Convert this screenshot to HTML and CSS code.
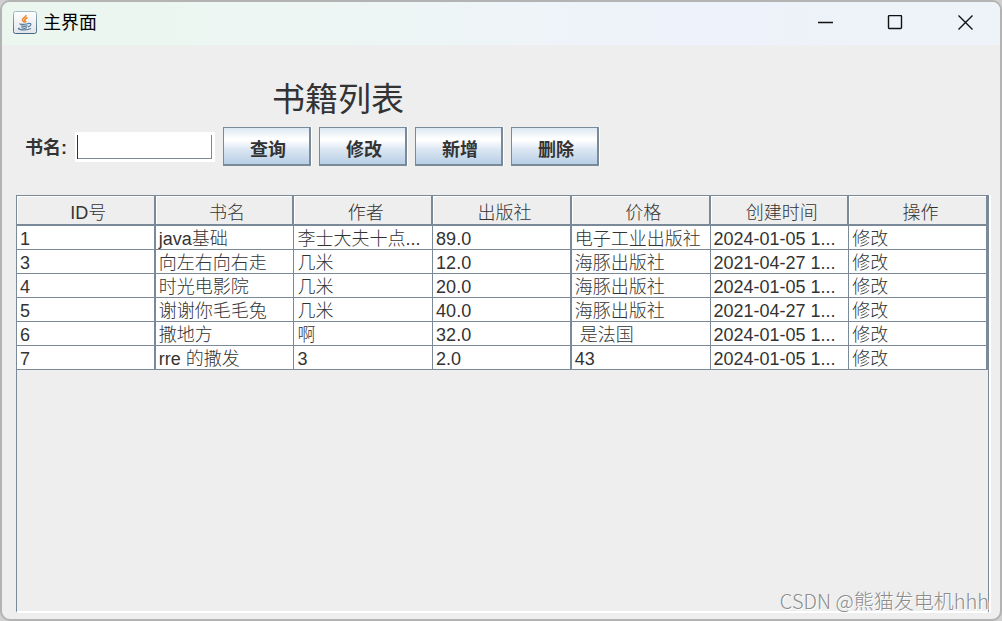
FILE: index.html
```html
<!DOCTYPE html>
<html lang="zh-CN">
<head>
<meta charset="utf-8">
<meta name="viewport" content="width=device-width, initial-scale=1">
<title>主界面</title>
<link rel="stylesheet" href="styles.css">
</head>
<body>
<div class="window">
  <header class="titlebar">
    <svg class="app-icon" viewBox="0 0 24 24" aria-hidden="true">
      <defs><linearGradient id="tile" x1="0" y1="0" x2="0" y2="1"><stop offset="0" stop-color="#fff"/><stop offset="1" stop-color="#e2e4e8"/></linearGradient>
      <linearGradient id="edge" x1="0" y1="0" x2="0" y2="1"><stop offset="0" stop-color="#9fbac6"/><stop offset="1" stop-color="#456685"/></linearGradient></defs>
      <rect x="0.5" y="0.5" width="23" height="22" rx="2" fill="url(#tile)" stroke="url(#edge)"/>
      <path d="M13 4C13.500 6.500 8.500 7 9.500 9.200C10 10 11 10.500 11.300 11.500M14.500 6.500C11.500 8.200 11 9 12.700 10.500L12 11.500" fill="none" stroke="#f08a2c" stroke-width="1.600"/>
      <path d="M7 12.500C6 13.700 14 13.700 16 12.300M8 14.500C8.500 15.500 13 15.500 14.500 14.600M8.500 16.300C10 17.500 12.500 17.300 14 16.500M15.500 12.500C19 11.500 18.500 15 15 15.800M6.500 17C2 18.500 13 20 18 17.500" fill="none" stroke="#5c81a0" stroke-width="1.300"/>
    </svg>
    <span class="caption">主界面</span>
    <div class="window-controls">
      <button type="button" class="control" aria-label="最小化"><svg viewBox="0 0 16 16"><path d="M1 7.500H16"/></svg></button>
      <button type="button" class="control" aria-label="最大化"><svg viewBox="0 0 16 16"><rect x="1.500" y="0.500" width="13" height="13" rx="1"/></svg></button>
      <button type="button" class="control" aria-label="关闭"><svg viewBox="0 0 16 16"><path d="M1.500 0.500L15.500 14.500M15.500 0.500L1.500 14.500"/></svg></button>
    </div>
  </header>
  <main class="content">
    <h1 class="heading">书籍列表</h1>
    <form class="search">
      <label class="search-label" for="book-name">书名:</label>
      <input class="search-input" id="book-name" type="text">
      <button type="button" class="action">查询</button>
      <button type="button" class="action">修改</button>
      <button type="button" class="action">新增</button>
      <button type="button" class="action">删除</button>
    </form>
    <div class="table-pane">
      <table class="books">
        <thead>
          <tr><th>ID号</th><th>书名</th><th>作者</th><th>出版社</th><th>价格</th><th>创建时间</th><th>操作</th></tr>
        </thead>
        <tbody>
          <tr><td>1</td><td>java基础</td><td>李士大夫十点...</td><td>89.0</td><td>电子工业出版社</td><td>2024-01-05 1...</td><td>修改</td></tr>
          <tr><td>3</td><td>向左右向右走</td><td>几米</td><td>12.0</td><td>海豚出版社</td><td>2021-04-27 1...</td><td>修改</td></tr>
          <tr><td>4</td><td>时光电影院</td><td>几米</td><td>20.0</td><td>海豚出版社</td><td>2024-01-05 1...</td><td>修改</td></tr>
          <tr><td>5</td><td>谢谢你毛毛兔</td><td>几米</td><td>40.0</td><td>海豚出版社</td><td>2021-04-27 1...</td><td>修改</td></tr>
          <tr><td>6</td><td>撒地方</td><td>啊</td><td>32.0</td><td> 是法国</td><td>2024-01-05 1...</td><td>修改</td></tr>
          <tr><td>7</td><td>rre 的撒发</td><td>3</td><td>2.0</td><td>43</td><td>2024-01-05 1...</td><td>修改</td></tr>
        </tbody>
      </table>
    </div>
  </main>
  <div class="watermark">CSDN @熊猫发电机hhh</div>
</div>
</body>
</html>
```
FILE: styles.css
```css
* {
  box-sizing: border-box;
}

body {
  margin: 0;
  background: #d0d0d0;
  color: #333;
  font-family: "Liberation Sans", "Noto Sans CJK SC", sans-serif;
  font-size: 18px;
}

.window {
  position: relative;
  display: flex;
  flex-direction: column;
  min-height: 100vh;
  overflow: hidden;
  border: 2px solid #b3b3b3;
  border-radius: 10px;
  background: #eee;
}

.titlebar {
  display: flex;
  align-items: center;
  height: 43px;
  padding: 0 0 2px 11px;
  background: linear-gradient(90deg, #ebf6ef, #edf6f3 30%, #eef2fb 70%, #edf3f8 90%);
}

.app-icon {
  width: 24px;
  height: 24px;
}

.caption {
  margin-left: 6px;
  color: #000;
  line-height: 24px;
}

.window-controls {
  display: flex;
  height: 100%;
  margin-left: auto;
}

.control {
  display: grid;
  place-items: center;
  width: 70px;
  padding: 0;
  border: 0;
  background: none;
}

.control svg {
  width: 16px;
  height: 16px;
  fill: none;
  stroke: #111;
  stroke-width: 1.4;
}

.content {
  display: flex;
  flex: 1;
  flex-direction: column;
  padding: 32px 11px 6px 14px;
}

.heading {
  margin: 0 0 5px 256px;
  font-size: 33px;
  font-weight: 400;
  line-height: 45px;
}

.search {
  display: flex;
  align-items: center;
  gap: 8px;
  padding-left: 9px;
}

.search-label {
  padding-top: 2px;
  font-weight: 700;
  line-height: 24px;
}

.search-input {
  width: 140px;
  height: 30px;
  padding: 0 4px;
  border: 2px solid #fff;
  border-width: 3px 3px 3px 2px;
  background: #fff;
  box-shadow: inset 1px 0 #333, inset -1px -1px #7a8a99;
  color: #333;
  font: inherit;
}

.action {
  width: 88px;
  height: 39px;
  padding: 3px 0 0 3px;
  border: 1px solid #7a8a99;
  border-width: 1px 2px 2px 1px;
  background: linear-gradient(#dde8f3, #fff 30%, #fff 34%, #dbe6f2 60%, #b8cfe5);
  box-shadow: 1px 0 #fff;
  color: #333;
  font: inherit;
  font-weight: 700;
}

.table-pane {
  flex: 1;
  margin-top: 29px;
  border: 1px solid #7a8a99;
  border-bottom: 2px solid #fff;
  box-shadow: 2px 0 #fff;
}

.books {
  width: 100%;
  border-collapse: separate;
  border-spacing: 0;
  table-layout: fixed;
}

.books th {
  height: 30px;
  padding: 6px 0 0 6px;
  border-right: 2px solid #7a8a99;
  border-bottom: 2px solid #7a8a99;
  background: #eee;
  box-shadow: inset 1px 1px #fff;
  font-weight: 300;
  line-height: 22px;
}

.books td {
  height: 24px;
  padding: 4px 3px 0;
  overflow: hidden;
  border-right: 1px solid #7a8a99;
  border-bottom: 1px solid #7a8a99;
  background: #fff;
  font-weight: 300;
  line-height: 19px;
  white-space: pre;
}

.books td:nth-child(3n + 1) {
  border-right-width: 2px;
}

.watermark {
  position: absolute;
  right: 11px;
  bottom: 6px;
  color: #8c8c8c;
  font-family: "Noto Sans CJK SC", sans-serif;
  font-size: 20px;
  font-weight: 300;
  line-height: 24px;
  text-shadow: 1px 1px #fff;
}
```
